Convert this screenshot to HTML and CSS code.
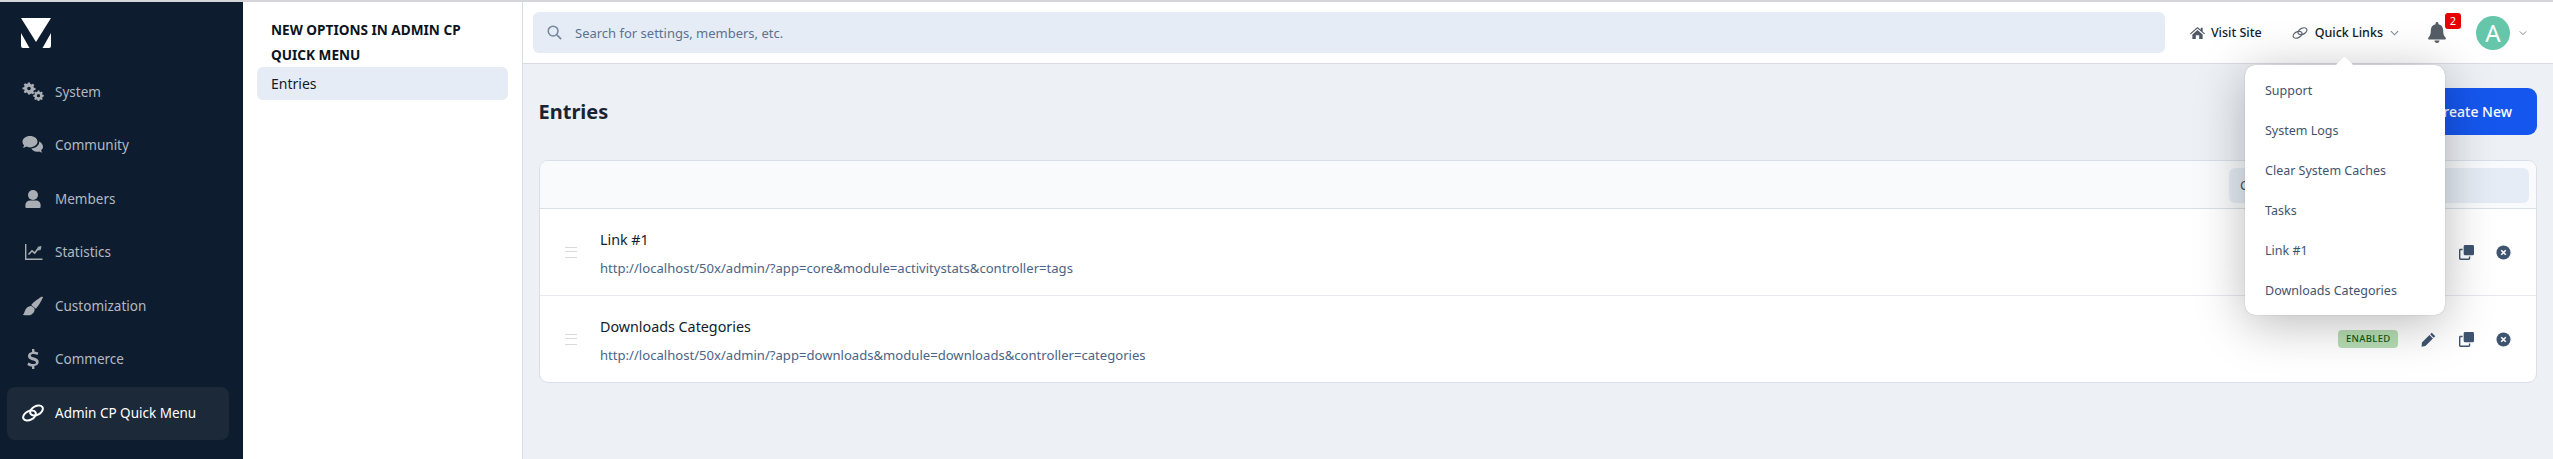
FILE: index.html
```html
<!DOCTYPE html>
<html lang="en">
<head>
    <meta charset="UTF-8">
    <meta name="viewport" content="width=device-width,initial-scale=1.0">
    <title>Admin CP Quick Menu</title>
    <link rel="stylesheet" href="styles.css">
</head>
<body>
    <div class="page">
        <nav class="sidebar">
            <svg class="logo" viewBox="0 0 30 30"><path d="M0 0H30L15 24ZM0 15L8.5 30H2A2 2 0 0 1 0 28ZM30 15L21.5 30H28A2 2 0 0 0 30 28Z"/></svg>
            <a class="side-item">
                <svg class="side-icon" viewBox="0 0 22 20"><path d="M6 .5h2l.3 1.600 1.200.5 1.400-.9 1.400 1.400-.9 1.400.5 1.200 1.600.3v2l-1.600.3-.5 1.200.9 1.400-1.400 1.400-1.400-.9-1.200.5L8 12.500H6l-.3-1.600-1.200-.5-1.400.9-1.400-1.400.9-1.400-.5-1.200L.5 7.500v-2l1.600-.3.5-1.200-.9-1.400L3.100 1.200l1.400.9 1.200-.5ZM7 4.700a1.800 1.800 0 1 0 0 3.600 1.800 1.800 0 0 0 0-3.600Z"/><path d="M15.700 8.500h1.600l.3 1.300 1 .4 1.100-.7 1.100 1.100-.7 1.100.4 1 1.300.3v1.600l-1.300.3-.4 1 .7 1.100-1.100 1.100-1.100-.7-1 .4-.3 1.300h-1.600l-.3-1.300-1-.4-1.100.7-1.100-1.100.7-1.100-.4-1-1.300-.3v-1.600l1.300-.3.4-1-.7-1.100 1.100-1.100 1.100.7 1-.4Zm.8 3.600a1.600 1.600 0 1 0 0 3.200 1.600 1.600 0 0 0 0-3.200Z"/></svg>
                <span>System</span>
            </a>
            <a class="side-item">
                <svg class="side-icon" viewBox="0 0 22 20"><path d="M8 1C3.800 1 .5 3.500.5 6.800c0 1.400.6 2.600 1.600 3.600-.3.900-.9 1.700-1.600 2.400 1.300 0 2.700-.4 3.700-1.200 1.100.5 2.400.8 3.800.8 4.200 0 7.500-2.600 7.500-5.800S12.200 1 8 1Z"/><path d="M17.200 6.500c.2 3.900-3.300 6.700-7.900 7.100.9 2 3.100 3.200 5.700 3.200.8 0 1.500-.1 2.200-.3.900.7 2 1 3.300 1-.6-.6-1.100-1.300-1.400-2.100 1.100-.9 1.900-2 1.900-3.300 0-2.400-1.500-4.500-3.800-5.600Z"/></svg>
                <span>Community</span>
            </a>
            <a class="side-item">
                <svg class="side-icon" viewBox="0 0 22 20"><circle cx="11" cy="6" r="5"/><path d="M4.300 19c-.5 0-.9-.4-.9-.9v-2c0-2.700 2.100-4.600 4.700-4.600h5.800c2.600 0 4.700 1.900 4.700 4.600v2c0 .5-.4.900-.9.900Z"/></svg>
                <span>Members</span>
            </a>
            <a class="side-item">
                <svg class="side-icon" viewBox="0 0 22 20"><path d="M3 2h1.400v14.500H20.500V18H3Z"/><path d="M6.500 12.500l3.500-3.700 2.700 2.300 3.300-4.300 1.500 1.500" fill="none" stroke="#a9aeb4" stroke-width="1.600"/><path d="M15.300 5l4.200-.9-.9 4.200Z"/></svg>
                <span>Statistics</span>
            </a>
            <a class="side-item">
                <svg class="side-icon" viewBox="0 0 22 20"><path d="M20.500 .8c.4.300.4.800.2 1.300-1.600 3.300-4.500 8.600-7 10.600L9.200 9C11 6.400 16.500 2.500 19.400.8c.4-.2.800-.2 1.100 0Z"/><path d="M8.400 10c2 .1 4.200 1.800 4.300 3.800-.6 3.600-3.500 5.500-6.100 5.500-2 0-4.200-.1-5.800-.3 1.800-1.200 1.500-3.700 3-5.900 1-1.600 2.700-2.800 4.600-3.100Z"/></svg>
                <span>Customization</span>
            </a>
            <a class="side-item">
                <svg class="side-icon" viewBox="0 0 22 20"><path d="M10 0h2.400v2.400c1.500.2 3 .7 4 1.300l-1 2.300c-1.200-.6-2.600-1.100-4-1.100-1.600 0-2.700.6-2.700 1.600 0 2.700 8 1.300 8 6.500 0 2.200-1.800 3.700-4.300 4.100V20H10v-2.400c-1.800-.2-3.500-.8-4.700-1.700l1.100-2.300c1.300.9 3 1.500 4.600 1.500 1.800 0 3-.7 3-1.700 0-2.700-8-1.400-8-6.500 0-2.100 1.700-3.600 4-4Z"/></svg>
                <span>Commerce</span>
            </a>
            <a class="side-item side-item-active">
                <svg class="side-icon" viewBox="0 0 22 20"><g fill="none" stroke="#fff" stroke-width="2"><ellipse cx="14.500" cy="7.500" rx="6.800" ry="4.300" transform="rotate(-28 14.500 7.500)"/><ellipse cx="7.500" cy="12.500" rx="6.800" ry="4.300" transform="rotate(-28 7.500 12.500)"/></g></svg>
                <span>Admin CP Quick Menu</span>
            </a>
        </nav>

        <aside class="submenu">
            <h3 class="submenu-title">New Options in Admin CP Quick Menu</h3>
            <a class="submenu-item">Entries</a>
        </aside>

        <div class="main">
            <header class="topbar">
                <div class="search">
                    <svg class="search-icon" viewBox="0 0 16 16"><circle cx="6.500" cy="6.500" r="5.200" fill="none" stroke="#75879c" stroke-width="1.600"/><path d="M10.500 10.500L15 15" stroke="#75879c" stroke-width="1.800"/></svg>
                    <span>Search for settings, members, etc.</span>
                </div>
                <a class="top-link visit-link">
                    <svg class="top-icon" viewBox="0 0 16 14"><path d="M8 .5L0 7.500l.8.900L8 2.200l7.200 6.200.8-.9-2.500-2.200V1.500h-2v2ZM2.500 8.500L8 3.700l5.500 4.800v5h-3.700V9.500H6.200v4H2.500Z" fill="#4f5864"/></svg>
                    <span>Visit Site</span>
                </a>
                <a class="top-link quick-link">
                    <svg class="top-icon" viewBox="0 0 22 20"><g fill="none" stroke="#5d6773" stroke-width="1.800"><ellipse cx="14.500" cy="7.500" rx="6.800" ry="4.300" transform="rotate(-28 14.500 7.500)"/><ellipse cx="7.500" cy="12.500" rx="6.800" ry="4.300" transform="rotate(-28 7.500 12.500)"/></g></svg>
                    <span>Quick Links</span>
                    <svg class="chevron" viewBox="0 0 10 6"><path d="M1 1l4 4 4-4" fill="none" stroke="#7c8794" stroke-width="1.200"/></svg>
                </a>
                <div class="bell">
                    <svg class="bell-icon" viewBox="0 0 18 21"><path d="M9 0c.8 0 1.400.6 1.400 1.400v.8c3 .6 4.800 3 4.800 6 0 4.400 1 5.800 2.300 7.200.3.300.4.600.4 1 0 .7-.6 1.200-1.300 1.200H1.400C.7 17.600.1 17.100.1 16.400c0-.4.100-.7.400-1 1.300-1.400 2.300-2.800 2.300-7.200 0-3 1.800-5.400 4.800-6v-.8C7.600.6 8.200 0 9 0ZM6.500 18.500h5C11.500 20 10.400 21 9 21s-2.500-1-2.500-2.500Z" fill="#555c66"/></svg>
                    <span class="bell-count">2</span>
                </div>
                <div class="avatar">A</div>
                <svg class="chevron avatar-chevron" viewBox="0 0 10 6"><path d="M1 1l4 4 4-4" fill="none" stroke="#7c8794" stroke-width="1.200"/></svg>
            </header>

            <div class="content">
                <div class="page-head">
                    <h1>Entries</h1>
                    <a class="btn-create">Create New</a>
                </div>
                <div class="card">
                    <div class="card-head">
                        <div class="card-search">C</div>
                    </div>
                    <div class="row">
                        <div class="handle"></div>
                        <div class="row-text">
                            <div class="row-title">Link #1</div>
                            <div class="row-url">http://localhost/50x/admin/?app=core&amp;module=activitystats&amp;controller=tags</div>
                        </div>
                        <span class="badge">Enabled</span>
                        <svg class="act act-edit" viewBox="0 0 16 16"><path d="M11.500.8l3.700 3.700-1.700 1.700-3.700-3.700ZM9 3.300L12.700 7l-8 8L.6 15.800 1 11.300Z" fill="#3f5470"/></svg>
                        <svg class="act act-clone" viewBox="0 0 16 16"><use href="#clone-shape"/></svg>
                        <svg class="act" viewBox="0 0 16 16"><use href="#close-shape"/></svg>
                    </div>
                    <div class="row">
                        <div class="handle"></div>
                        <div class="row-text">
                            <div class="row-title">Downloads Categories</div>
                            <div class="row-url">http://localhost/50x/admin/?app=downloads&amp;module=downloads&amp;controller=categories</div>
                        </div>
                        <span class="badge">Enabled</span>
                        <svg class="act act-edit" viewBox="0 0 16 16"><path d="M11.500.8l3.700 3.700-1.700 1.700-3.700-3.700ZM9 3.300L12.700 7l-8 8L.6 15.800 1 11.300Z" fill="#3f5470"/></svg>
                        <svg class="act act-clone" viewBox="0 0 16 16">
                            <g id="clone-shape" fill="#3f5470"><rect x="5" y="0" width="11" height="11" rx="1.500"/><path d="M3.800 4v1.500H1.700a.3.300 0 0 0-.2.200v8.600c0 .1.100.2.200.2h8.600c.1 0 .2-.1.200-.2v-2.100H12v2.300c0 .9-.7 1.500-1.500 1.500h-9C.7 16 0 15.400 0 14.500v-9C0 4.700.7 4 1.500 4Z"/></g>
                        </svg>
                        <svg class="act" viewBox="0 0 16 16">
                            <g id="close-shape"><circle cx="8" cy="8" r="7.500" fill="#3f5470"/><path d="M5.600 5.600l4.800 4.800M10.400 5.600l-4.800 4.800" stroke="#fff" stroke-width="1.700"/></g>
                        </svg>
                    </div>
                </div>
            </div>

            <div class="dropdown">
                <a class="dropdown-item">Support</a>
                <a class="dropdown-item">System Logs</a>
                <a class="dropdown-item">Clear System Caches</a>
                <a class="dropdown-item">Tasks</a>
                <a class="dropdown-item">Link #1</a>
                <a class="dropdown-item">Downloads Categories</a>
            </div>
        </div>
    </div>
</body>
</html>
```

FILE: styles.css
```css
html,body{
    margin:0;
    height:100%;
    overflow:hidden;
}

body{
    font-family:"Noto Sans",Arial,sans-serif;
    background:#fff;
    border-top:2px solid #d3d5d8;
    box-sizing:border-box;
}

a{
    color:inherit;
    text-decoration:none;
}

.page{
    display:flex;
    height:100%;
}

/* dark sidebar */
.sidebar{
    width:243px;
    flex:none;
    background:#0e1c2f;
    padding:16px 14px 0 7px;
    box-sizing:border-box;
}

.logo{
    display:block;
    width:30px;
    height:30px;
    margin:0 0 17px 14px;
    fill:#fff;
}

.side-item{
    display:flex;
    align-items:center;
    height:53px;
    margin-bottom:.6px;
    padding-left:15px;
    border-radius:8px;
    color:#b4b9c0;
    font-size:13.500px;
}

.side-icon{
    width:22px;
    height:20px;
    margin-right:11px;
    flex:none;
    fill:#a9aeb4;
}

.side-item-active{
    background:#1b2939;
    color:#fff;
}

/* second column */
.submenu{
    width:279px;
    flex:none;
    padding:14.500px 14px 0;
    box-sizing:border-box;
}

.submenu-title{
    margin:0;
    padding:0 14px;
    font-size:13.600px;
    line-height:25px;
    font-weight:700;
    text-transform:uppercase;
    color:#0b1422;
}

.submenu-item{
    display:block;
    height:33px;
    line-height:33px;
    padding:0 14px;
    border-radius:6px;
    background:#e6ecf5;
    font-size:14px;
    color:#111c2c;
}

/* main column */
.main{
    flex:1;
    position:relative;
    min-width:0;
    background:#edf0f5;
    border-left:1px solid #d9dde3;
}

.topbar{
    display:flex;
    align-items:center;
    height:61px;
    padding:0 26px 0 10px;
    background:#fff;
    border-bottom:1px solid #d9dde3;
}

.search{
    flex:1;
    display:flex;
    align-items:center;
    height:41px;
    margin-right:25px;
    padding-left:14px;
    background:#e6ecf5;
    border-radius:6px;
    font-size:13px;
    color:#5b7290;
}

.search-icon{
    width:15px;
    height:15px;
    margin-right:13px;
}

.top-link{
    display:flex;
    align-items:center;
    font-size:12.500px;
    font-weight:500;
    color:#111c2c;
}

.top-icon{
    width:15px;
    height:14px;
    margin-right:6px;
}

.quick-link{
    margin-left:30px;
}

.quick-link .top-icon{
    width:16px;
    margin-right:7px;
}

.chevron{
    width:9px;
    height:6px;
    margin-left:7px;
}

.bell{
    position:relative;
    margin-left:29px;
    width:18px;
    height:21px;
}

.bell-icon{
    display:block;
    width:18px;
    height:21px;
}

.bell-count{
    position:absolute;
    left:17px;
    top:-9px;
    width:16px;
    height:16px;
    line-height:16px;
    text-align:center;
    background:#e60000;
    border-radius:3px;
    color:#fff;
    font-size:11px;
}

.avatar{
    width:34px;
    height:34px;
    margin-left:30px;
    border-radius:50%;
    background:#65c6a9;
    color:#fff;
    font-size:24px;
    line-height:34px;
    text-align:center;
}

.avatar-chevron{
    margin-left:9px;
    width:8px;
}

.content{
    padding:0 16px 0 15.500px;
}

.page-head{
    display:flex;
    align-items:center;
    justify-content:space-between;
    height:47px;
    margin-top:24px;
}

h1{
    margin:0;
    font-size:20px;
    font-weight:700;
    color:#1a2431;
}

.btn-create{
    padding:0 25px;
    height:47px;
    line-height:47px;
    background:#1557ee;
    border-radius:9px;
    color:#fff;
    font-size:14px;
    font-weight:500;
}

.card{
    margin-top:25px;
    background:#fff;
    border:1px solid #d8dfe8;
    border-radius:9px;
    overflow:hidden;
}

.card-head{
    display:flex;
    justify-content:flex-end;
    height:48px;
    padding:7px 7px 0;
    box-sizing:border-box;
    background:#f8fafc;
    border-bottom:1px solid #d8dfe8;
}

.card-search{
    width:289px;
    height:35px;
    line-height:35px;
    padding-left:11px;
    background:#e6ecf5;
    border-radius:6px;
    font-size:13px;
    color:#3f5470;
}

.row{
    display:flex;
    align-items:center;
    height:86px;
    padding-left:25px;
    padding-right:25px;
    border-bottom:1px solid #e6eaf0;
}

.row:last-child{
    border-bottom:none;
}

.handle{
    width:12px;
    height:11px;
    margin-right:23.500px;
    border-top:1.500px solid #d6dade;
    border-bottom:1.500px solid #d6dade;
    position:relative;
    box-sizing:border-box;
}

.handle:after{
    content:"";
    position:absolute;
    left:0;
    right:0;
    top:3px;
    border-top:1.500px solid #d6dade;
}

.row-text{
    flex:1;
    min-width:0;
    padding-top:4px;
}

.row-title{
    font-size:14.300px;
    line-height:20px;
    color:#111c2c;
}

.row-url{
    margin-top:8px;
    font-size:13.100px;
    line-height:20px;
    color:#4a6486;
}

.badge{
    height:18px;
    line-height:18px;
    padding:0 7.500px;
    background:#b6ddb4;
    border-radius:4px;
    color:#0f5a12;
    font-size:9.500px;
    font-weight:500;
    letter-spacing:.3px;
    text-transform:uppercase;
}

.act{
    width:15px;
    height:15px;
    margin-left:22px;
    flex:none;
}

.act-edit{
    margin-left:23px;
}

.act-clone{
    margin-left:23px;
}

/* quick links dropdown, over the page */
.dropdown{
    position:absolute;
    left:1722px;
    top:63px;
    width:200px;
    padding:6px 0 4px;
    background:#fff;
    border-radius:10px;
    box-shadow:0 0 1px rgba(0,0,0,.35),0 8px 50px rgba(0,0,0,.28);
}

.dropdown:before{
    content:"";
    position:absolute;
    left:93px;
    top:-6px;
    width:13px;
    height:13px;
    background:#fff;
    transform:rotate(45deg);
    border-radius:2px;
}

.dropdown-item{
    display:block;
    height:40px;
    line-height:40px;
    padding-left:20px;
    font-size:12.500px;
    color:#3f5470;
}
```
